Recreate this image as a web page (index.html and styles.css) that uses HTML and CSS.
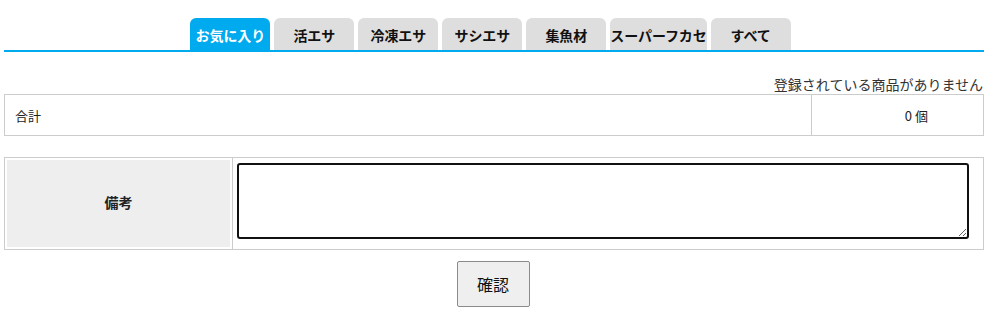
FILE: index.html
```html
<!DOCTYPE html>
<html lang="ja">
<head>
<meta charset="utf-8">
<title>お気に入り</title>
<link rel="stylesheet" href="styles.css">
</head>
<body>
<div class="page">
  <nav class="tabs">
    <a class="tab active">お気に入り</a>
    <a class="tab">活エサ</a>
    <a class="tab">冷凍エサ</a>
    <a class="tab">サシエサ</a>
    <a class="tab">集魚材</a>
    <a class="tab">スーパーフカセ</a>
    <a class="tab">すべて</a>
  </nav>
  <div class="tab-line"></div>
  <p class="message">登録されている商品がありません</p>
  <div class="total">
    <div class="total-label">合計</div>
    <div class="total-value">0<span class="unit">個</span></div>
  </div>
  <div class="note">
    <div class="note-head"><div class="note-label">備考</div></div>
    <div class="note-body"><textarea class="note-input"></textarea></div>
  </div>
  <div class="actions"><button class="confirm" type="button">確認</button></div>
</div>
</body>
</html>
```
FILE: styles.css
```css
* { box-sizing: border-box; }
html, body { margin: 0; padding: 0; background: #fff; }
body {
  font-family: "Noto Sans CJK JP", "Noto Sans", "Liberation Sans", sans-serif;
  color: #222;
}
.page {
  width: 980px;
  margin-left: 4px;
  padding-top: 18px;
}
.tabs {
  display: flex;
  justify-content: center;
  gap: 4px;
  height: 33px;
  padding-right: 7px;
}
.tab-line {
  height: 2px;
  margin-top: -1px;
  background: #00aaee;
  position: relative;
}
.tab {
  display: flex;
  align-items: center;
  justify-content: center;
  min-width: 80px;
  height: 33px;
  background: #dedede;
  border-radius: 6px 6px 0 0;
  font-size: 14px;
  font-weight: bold;
  color: #111;
  white-space: nowrap;
  letter-spacing: -0.1px;
}
.tab.active {
  background: #00aaee;
  color: #fff;
}
.message {
  margin: 22px 0 0 0;
  height: 20px;
  line-height: 20px;
  text-align: right;
  font-size: 14px;
  color: #333;
  padding-right: 1px;
}
.total {
  display: flex;
  height: 42px;
  border: 1px solid #ccc;
  font-size: 13px;
}
.total-label {
  flex: 1;
  display: flex;
  align-items: center;
  padding-left: 10px;
  border-right: 1px solid #ccc;
}
.total-value {
  width: 171px;
  display: flex;
  align-items: center;
  justify-content: flex-end;
  padding-right: 55px;
}
.unit { margin-left: 3px; }
.note {
  display: flex;
  margin-top: 21px;
  height: 93px;
  border: 1px solid #ccc;
}
.note-head {
  width: 228px;
  padding: 2px;
  border-right: 1px solid #ccc;
}
.note-label {
  height: 100%;
  background: #eee;
  display: flex;
  align-items: center;
  justify-content: center;
  padding-bottom: 3px;
  font-size: 14px;
  font-weight: bold;
  color: #222;
}
.note-body {
  flex: 1;
  padding: 5px 14px 10px 4px;
}
.note-input {
  display: block;
  width: 100%;
  height: 76px;
  border: 2px solid #111;
  border-radius: 3px;
  outline: none;
  resize: vertical;
  font-family: inherit;
  font-size: 13px;
  margin: 0;
}
.actions {
  display: flex;
  justify-content: center;
  padding-top: 11px;
  padding-right: 2px;
}
.confirm {
  width: 73px;
  height: 46px;
  background: #efefef;
  border: 1px solid #8a8a8a;
  border-radius: 2px;
  font-family: inherit;
  font-size: 16px;
  color: #111;
  padding: 0;
}
```
